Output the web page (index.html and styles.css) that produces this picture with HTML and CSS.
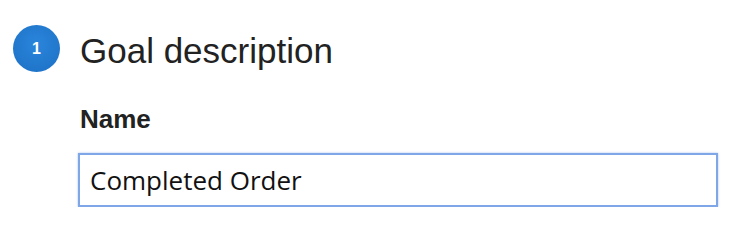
FILE: index.html
```html
<!DOCTYPE html>
<html lang="en">
<head>
    <meta charset="UTF-8">
    <meta name="viewport" content="width=device-width, initial-scale=1.0">
    <title>Goal setup</title>
    <link rel="stylesheet" href="styles.css">
</head>
<body>
    <section class="step">
        <div class="step-header">
            <span class="step-number">1</span>
            <h2 class="step-title">Goal description</h2>
        </div>

        <div class="step-body">
            <label class="field-label" for="goal-name">Name</label>
            <input id="goal-name" class="field-input" type="text" value="Completed Order">
        </div>
    </section>
</body>
</html>
```

FILE: styles.css
```css
* {
    box-sizing: border-box;
    margin: 0;
    padding: 0;
}

body {
    font-family: "Liberation Sans", Arial, sans-serif;
    background-color: #fff;
    color: #222;
}

.step {
    padding: 25px 0 0 13px;
}

.step-header {
    display: flex;
    align-items: center;
    gap: 20px;
}

.step-number {
    display: flex;
    align-items: center;
    justify-content: center;
    width: 47px;
    height: 47px;
    border-radius: 50%;
    background: radial-gradient(circle at 50% 40%, #2a86db, #1c6fc4);
    color: #fff;
    font-size: 16px;
    font-weight: bold;
}

.step-title {
    padding-top: 5px;
    font-size: 35px;
    font-weight: normal;
    color: #222;
}

.step-body {
    padding: 32px 0 0 65px;
}

.field-label {
    display: block;
    font-size: 26px;
    font-weight: bold;
    margin-bottom: 18px;
    padding-left: 2px;
}

.field-input {
    display: block;
    width: 640px;
    height: 54px;
    padding: 0 10px;
    border: 2px solid #7fa6e6;
    box-shadow: 0 0 2px rgba(80, 130, 220, 0.5);
    font-family: "Open Sans", sans-serif;
    font-size: 26px;
    color: #111;
    outline: none;
}
```
